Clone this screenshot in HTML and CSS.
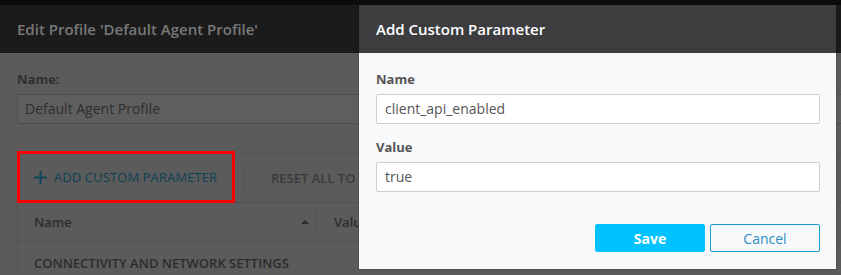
FILE: index.html
```html
<!DOCTYPE html>
<html lang="en">
<head>
    <meta charset="UTF-8">
    <title>Edit Profile</title>
    <link rel="stylesheet" href="styles.css">
</head>
<body>
    <div class="top-strip"></div>
    <div class="page">
        <!-- background dialog, dimmed -->
        <div class="page-header">Edit Profile 'Default Agent Profile'</div>
        <div class="page-body">
            <div class="field-label">Name:</div>
            <div class="page-input">Default Agent Profile</div>

            <div class="panel">
                <div class="toolbar">
                    <div class="add-btn highlight">
                        <svg class="plus" width="13" height="13" viewBox="0 0 13 13">
                            <path d="M6.5 0v13M0 6.5h13" stroke="#0e4456" stroke-width="2"/>
                        </svg>
                        <span>ADD CUSTOM PARAMETER</span>
                    </div>
                    <div class="tool-sep"></div>
                    <div class="reset-btn">RESET ALL TO DEFAULT</div>
                </div>
                <div class="table-head">
                    <div class="col-name">
                        <span>Name</span>
                        <span class="sort-arrow"></span>
                    </div>
                    <div class="col-sep"></div>
                    <div class="col-value">Value</div>
                </div>
                <div class="group-row">CONNECTIVITY AND NETWORK SETTINGS</div>
            </div>
        </div>

        <!-- modal -->
        <div class="modal">
            <div class="modal-header">Add Custom Parameter</div>
            <div class="modal-body">
                <div class="modal-label">Name</div>
                <div class="modal-input">client_api_enabled</div>
                <div class="modal-label">Value</div>
                <div class="modal-input">true</div>
                <div class="modal-actions">
                    <button class="btn-save">Save</button>
                    <button class="btn-cancel">Cancel</button>
                </div>
            </div>
        </div>
    </div>
</body>
</html>
```

FILE: styles.css
```css
* {
    margin: 0;
    padding: 0;
    box-sizing: border-box;
}
body {
    width: 841px;
    height: 275px;
    overflow: hidden;
    background: #5b5b5b;
    font-family: "Open Sans", "Liberation Sans", sans-serif;
}
.top-strip {
    height: 5px;
    background: #0c0c0c;
}
.page {
    position: relative;
}
.page-header {
    height: 48px;
    background: #1b1b1b;
    color: #787878;
    font-size: 15px;
    font-weight: 600;
    line-height: 48px;
    padding-left: 17px;
}
.page-body {
    padding: 17px 0 0 17px;
}
.field-label {
    color: #2f2f2f;
    font-size: 13px;
    font-weight: 700;
    line-height: 18px;
    margin-bottom: 6px;
}
.page-input {
    height: 30px;
    border: 1px solid #4e4e4e;
    border-right: none;
    background: #5e5e5e;
    border-radius: 2px 0 0 2px;
    color: #2e2e2e;
    font-size: 14px;
    line-height: 28px;
    padding-left: 7px;
}
.panel {
    margin-top: 29px;
    border-top: 1px solid #525252;
    border-left: 1px solid #525252;
}
.toolbar {
    height: 49px;
    display: flex;
    align-items: center;
    border-bottom: 1px solid #525252;
}
.add-btn {
    display: flex;
    align-items: center;
    gap: 7px;
    height: 52px;
    margin-top: -2px;
    margin-left: -1px;
    padding-left: 14px;
    width: 218px;
    color: #0c4254;
    font-size: 13px;
    letter-spacing: 0.1px;
}
.highlight {
    border: 3px solid #ff0000;
}
.plus {
    flex-shrink: 0;
}
.tool-sep {
    width: 1px;
    height: 22px;
    background: #505050;
    margin: 0 26px 0 9px;
}
.reset-btn {
    color: #3a3a3a;
    font-size: 13px;
    font-weight: 600;
    white-space: nowrap;
}
.table-head {
    height: 39px;
    display: flex;
    align-items: center;
    border-bottom: 1px solid #525252;
    color: #2c2c2c;
    font-size: 13px;
    font-weight: 600;
}
.col-name {
    width: 298px;
    display: flex;
    align-items: center;
    justify-content: space-between;
    padding-left: 16px;
    padding-right: 7px;
}
.sort-arrow {
    width: 0;
    height: 0;
    border-left: 4px solid transparent;
    border-right: 4px solid transparent;
    border-bottom: 4px solid #2c2c2c;
}
.col-sep {
    width: 1px;
    height: 20px;
    background: #505050;
    margin-right: 17px;
}
.group-row {
    padding-left: 16px;
    padding-top: 12px;
    color: #2c2c2c;
    font-size: 13px;
    font-weight: 600;
}
.modal {
    position: absolute;
    top: 0;
    left: 359px;
    width: 477px;
    height: 264px;
    background: #f8f9fb;
    box-shadow: 0 0 2px rgba(0, 0, 0, 0.3);
}
.modal-header {
    height: 48px;
    background: #3d3d3f;
    color: #ffffff;
    font-size: 15px;
    font-weight: 600;
    line-height: 48px;
    padding-left: 17px;
}
.modal-body {
    padding: 17px 16px 0 17px;
}
.modal-label {
    color: #555555;
    font-size: 13px;
    font-weight: 700;
    line-height: 18px;
    margin-bottom: 6px;
}
.modal-input {
    height: 30px;
    border: 1px solid #cfcfcf;
    border-radius: 2px;
    background: #ffffff;
    color: #555555;
    font-size: 14px;
    line-height: 28px;
    padding-left: 8px;
    margin-bottom: 14px;
}
.modal-actions {
    display: flex;
    justify-content: flex-end;
    gap: 5px;
    margin-top: 32px;
}
.btn-save, .btn-cancel {
    width: 110px;
    height: 28px;
    border-radius: 2px;
    font-family: inherit;
    font-size: 14px;
}
.btn-save {
    background: #00c2ff;
    border: 1px solid #00c2ff;
    color: #ffffff;
    font-weight: 700;
}
.btn-cancel {
    background: #f8f9fb;
    border: 1px solid #1a9cc9;
    color: #2a8fc2;
}
```
